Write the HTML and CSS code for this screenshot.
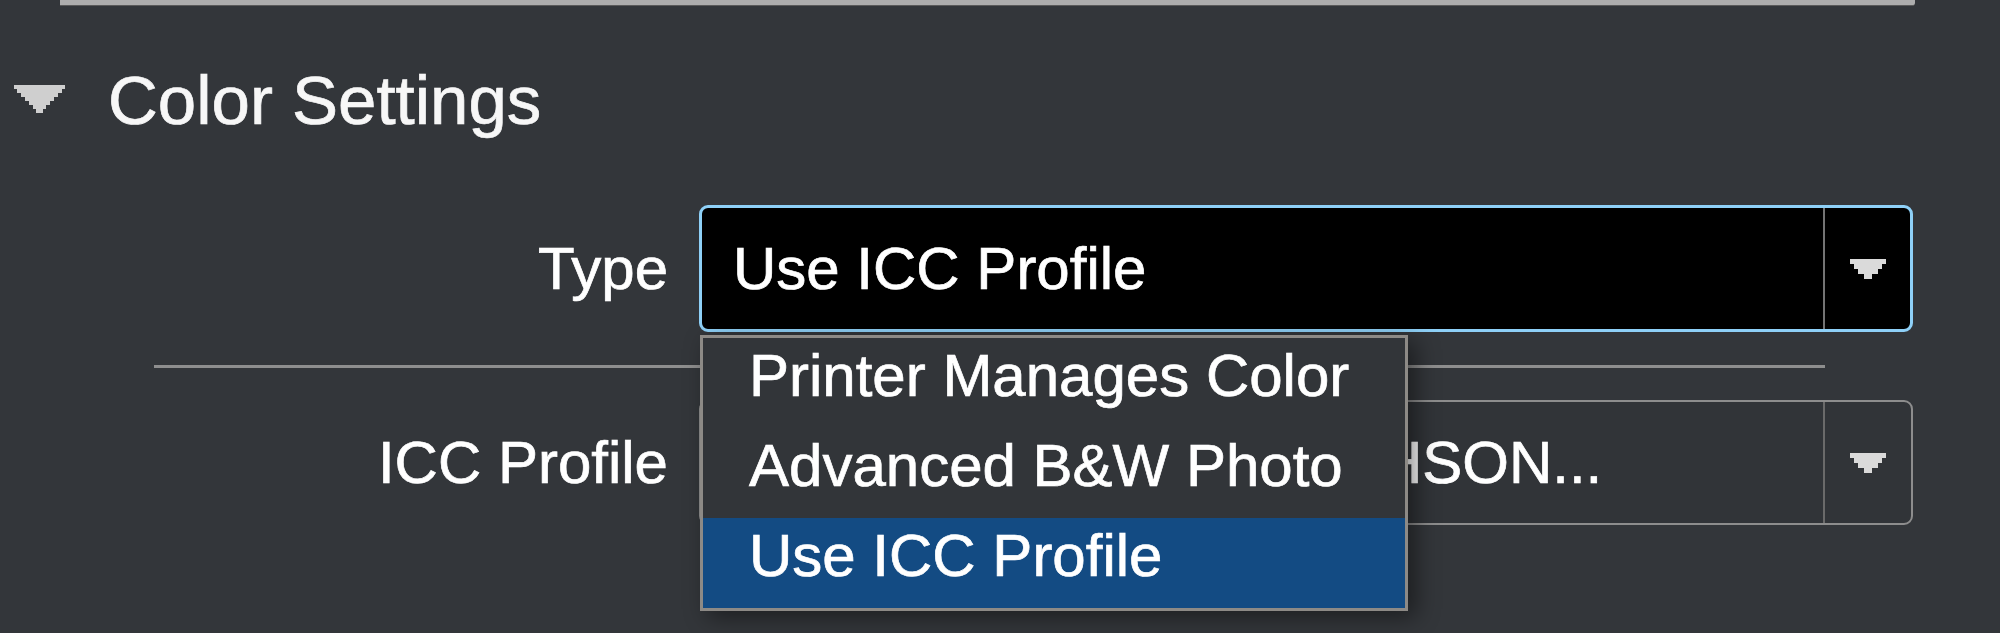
FILE: index.html
```html
<!DOCTYPE html>
<html lang="en">
<head>
<meta charset="utf-8">
<title>Color Settings</title>
<link rel="stylesheet" href="styles.css">
</head>
<body>
<div class="page">
  <div class="topbar"></div>

  <div class="section-head">
    <svg class="disclosure" width="51" height="28" viewBox="0 0 51 28" aria-hidden="true">
      <path d="M0 0H51V4H48V8H44V12H40V16H36V20H32V24H29V28H22V24H19V20H15V16H11V12H7V8H3V4H0Z" fill="#cfcfcf"/>
    </svg>
    <h2 class="section-title">Color Settings</h2>
  </div>

  <div class="form">
    <div class="row row-type">
      <div class="label">Type</div>
      <div class="select select-active">
        <span class="select-value">Use ICC Profile</span>
        <span class="select-arrow">
          <svg width="36" height="20" viewBox="0 0 36 20" aria-hidden="true">
            <path d="M0 0H36V5H32V10H28V15H22V20H14V15H8V10H4V5H0Z" fill="#dadada"/>
          </svg>
        </span>
        <ul class="menu">
          <li class="menu-item">Printer Manages Color</li>
          <li class="menu-item">Advanced B&amp;W Photo</li>
          <li class="menu-item menu-item-selected">Use ICC Profile</li>
        </ul>
      </div>
    </div>

    <div class="separator"></div>

    <div class="row row-icc">
      <div class="label">ICC Profile</div>
      <div class="select select-plain">
        <span class="select-value">SC-P800 Series Glossy HSON...</span>
        <span class="select-arrow">
          <svg width="36" height="20" viewBox="0 0 36 20" aria-hidden="true">
            <path d="M0 0H36V5H32V10H28V15H22V20H14V15H8V10H4V5H0Z" fill="#dadada"/>
          </svg>
        </span>
      </div>
    </div>
  </div>
</div>
</body>
</html>
```

FILE: styles.css
```css
* {
  box-sizing: border-box;
}

html, body {
  margin: 0;
  padding: 0;
}

body {
  background: #33363a;
  width: 2000px;
  height: 633px;
  overflow: hidden;
  font-family: "Liberation Sans", Arial, Helvetica, sans-serif;
  color: #ffffff;
  -webkit-text-stroke: 0.7px currentColor;
}

.page {
  width: 2000px;
  height: 633px;
  display: flex;
  flex-direction: column;
}

.topbar {
  margin-left: 60px;
  width: 1855px;
  height: 6px;
  background: #adadad;
  border-bottom: 1px solid #5a5a5a;
  border-bottom-right-radius: 3px;
  flex: none;
}

.section-head {
  margin-top: 55px;
  height: 80px;
  padding-left: 14px;
  display: flex;
  align-items: center;
  gap: 43px;
  flex: none;
}

.disclosure {
  align-self: flex-start;
  margin-top: 24px;
  flex: none;
}

.section-title {
  margin: 0;
  font-size: 69px;
  line-height: 80px;
  font-weight: normal;
  color: #f7f7f7;
  white-space: nowrap;
}

.form {
  display: flex;
  flex-direction: column;
}

.row {
  display: flex;
  align-items: center;
  gap: 31px;
}

.row-type {
  margin-top: 64px;
  position: relative;
  z-index: 2;
}

.row-icc {
  margin-top: 32px;
}

.label {
  width: 668px;
  text-align: right;
  font-size: 60px;
  line-height: 70px;
  white-space: nowrap;
  flex: none;
}

.select {
  position: relative;
  width: 1214px;
  display: flex;
  align-items: stretch;
  border-radius: 9px;
  flex: none;
}

.select-active {
  height: 127px;
  background: #000000;
  border: 3px solid #8ed0f7;
}

.select-plain {
  height: 125px;
  background: #313438;
  border: 2px solid #8d8d8d;
}

.select-value {
  flex: 1;
  display: flex;
  align-items: center;
  padding-left: 31px;
  font-size: 60px;
  white-space: nowrap;
  overflow: hidden;
}

.select-arrow {
  width: 87px;
  flex: none;
  display: flex;
  align-items: center;
  justify-content: center;
  border-left: 2px solid #747474;
}

.select-plain .select-arrow {
  width: 88px;
  border-left-color: #6a6a6a;
}

.separator {
  margin-top: 33px;
  margin-left: 154px;
  width: 1671px;
  height: 3px;
  background: #8e8e8e;
  flex: none;
}

.menu {
  position: absolute;
  top: calc(100% + 6px);
  left: -2px;
  width: 708px;
  margin: 0;
  padding: 0;
  list-style: none;
  background: #323539;
  border: 3px solid #8d8a86;
  box-shadow: 8px 6px 22px rgba(0, 0, 0, 0.45);
}

.menu-item {
  font-size: 60px;
  line-height: 76px;
  padding: 0 0 14px 46px;
  white-space: nowrap;
  color: #ffffff;
}

.menu-item-selected {
  background: #134b83;
}
```
